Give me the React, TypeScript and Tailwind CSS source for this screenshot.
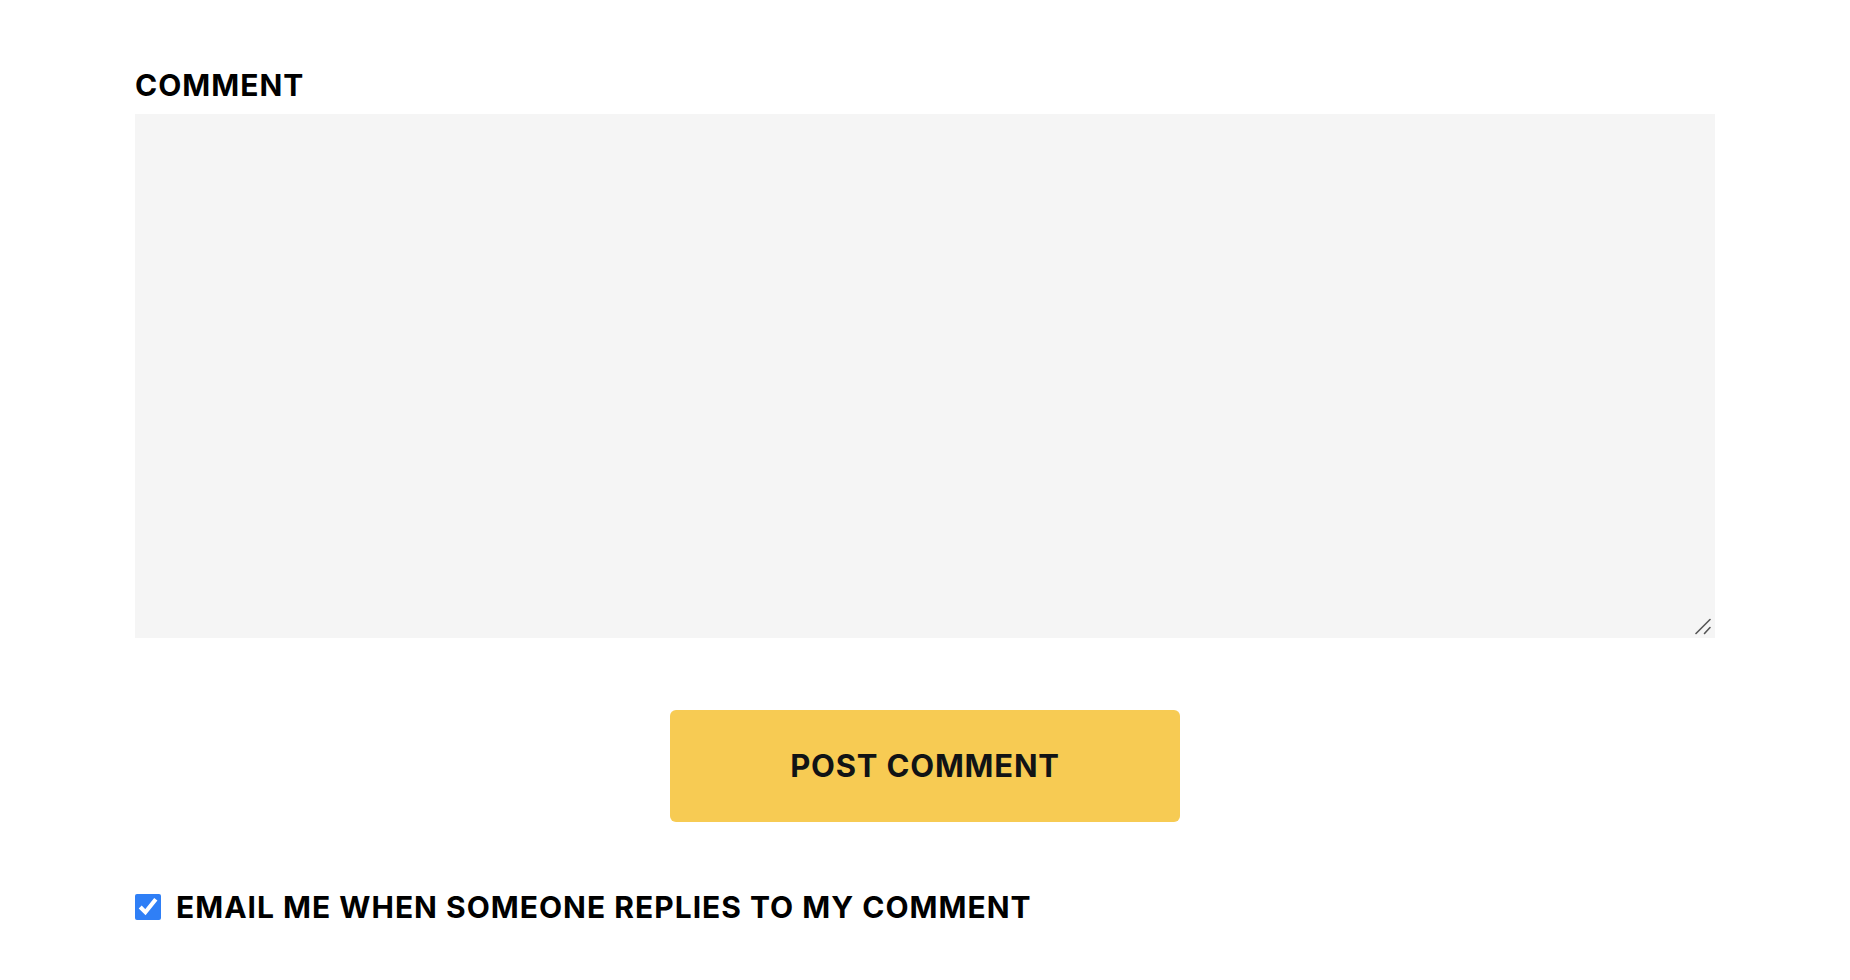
import { useState } from "react";

export default function App() {
  const [notify, setNotify] = useState(true);

  return (
    <div className="min-h-screen w-full bg-white font-['Inter','Liberation_Sans',sans-serif] text-black">
      <form className="mx-auto w-[1580px] pt-[67px]" onSubmit={(e) => e.preventDefault()}>
        <label htmlFor="comment" className="block text-[30px] font-bold leading-[36px] tracking-[1px]">
          COMMENT
        </label>
        <div className="relative mt-[11px]">
          <textarea
            id="comment"
            className="block h-[524px] w-full resize-none bg-[#f5f5f5] p-4 text-lg outline-none"
          />
          {/* resize grip */}
          <svg
            className="pointer-events-none absolute bottom-[3px] right-[3px]"
            width="17"
            height="17"
            viewBox="0 0 17 17"
          >
            <path d="M1 15.5 L15 1.5" stroke="#555" strokeWidth="1.6" strokeLinecap="round" />
            <path d="M9.5 15.5 L15 9.5" stroke="#555" strokeWidth="1.6" strokeLinecap="round" />
          </svg>
        </div>

        <div className="mt-[72px] flex justify-center">
          <button
            type="submit"
            className="h-[112px] w-[510px] rounded-[6px] bg-[#f7cb53] text-[31px] font-bold tracking-[0.8px] text-[#111315]"
          >
            POST COMMENT
          </button>
        </div>

        <label className="mt-[67px] flex items-center gap-[15px]">
          <input
            type="checkbox"
            checked={notify}
            onChange={(e) => setNotify(e.target.checked)}
            className="m-0 h-[26px] w-[26px] accent-[#2f7ff6]"
          />
          <span className="text-[30px] font-bold leading-[36px] tracking-[1px]">
            EMAIL ME WHEN SOMEONE REPLIES TO MY COMMENT
          </span>
        </label>
      </form>
    </div>
  );
}
